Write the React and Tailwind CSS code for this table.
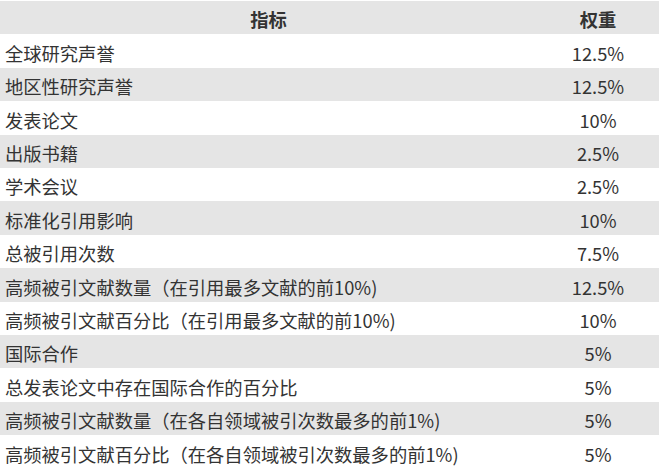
const rows = [
  ["全球研究声誉", "12.5%"],
  ["地区性研究声誉", "12.5%"],
  ["发表论文", "10%"],
  ["出版书籍", "2.5%"],
  ["学术会议", "2.5%"],
  ["标准化引用影响", "10%"],
  ["总被引用次数", "7.5%"],
  ["高频被引文献数量（在引用最多文献的前10%)", "12.5%"],
  ["高频被引文献百分比（在引用最多文献的前10%)", "10%"],
  ["国际合作", "5%"],
  ["总发表论文中存在国际合作的百分比", "5%"],
  ["高频被引文献数量（在各自领域被引次数最多的前1%)", "5%"],
  ["高频被引文献百分比（在各自领域被引次数最多的前1%)", "5%"],
];

export default function App() {
  return (
    <div
      className="w-[659px] h-[468px] bg-white pt-[1px] text-[#333] text-[18.3px] overflow-hidden"
      style={{ fontFamily: '"Noto Sans CJK SC", "Noto Sans", sans-serif' }}
    >
      <div className="grid grid-cols-[537px_122px] h-[33.4px] items-center bg-[#e5e5e5] font-bold pt-[5px]">
        <div className="text-center">指标</div>
        <div className="text-center">权重</div>
      </div>
      {rows.map(([name, weight], i) => (
        <div
          key={i}
          className={`grid grid-cols-[537px_122px] h-[33.4px] items-center pt-[5px] ${i % 2 === 1 ? "bg-[#e5e5e5]" : "bg-white"}`}
        >
          <div className="pl-[5px] whitespace-nowrap">{name}</div>
          <div className="text-center">{weight}</div>
        </div>
      ))}
    </div>
  );
}
